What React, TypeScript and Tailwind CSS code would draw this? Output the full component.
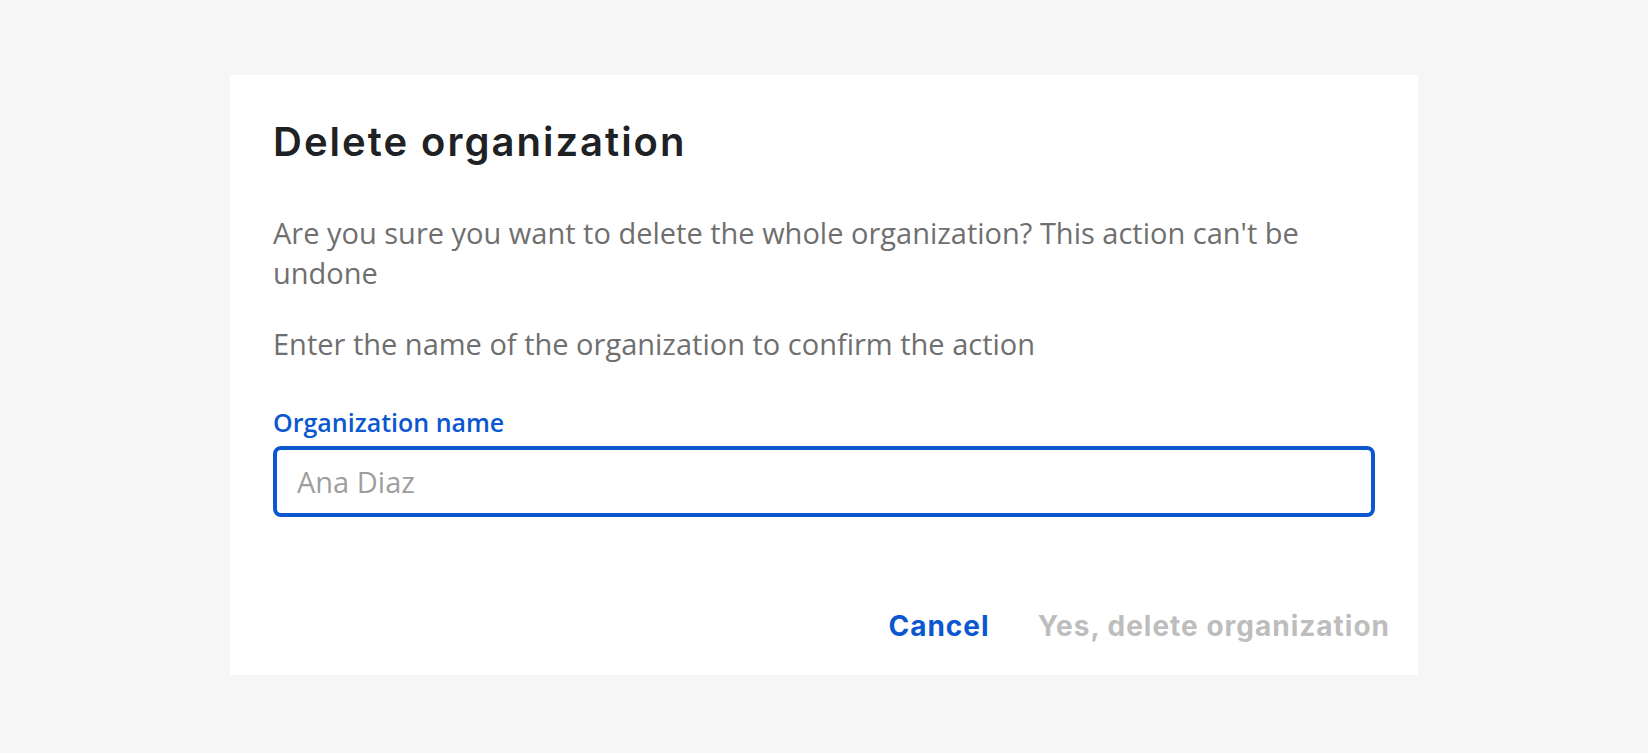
export default function App() {
  return (
    <div className="min-h-screen bg-[#f5f6f5] pt-[75px]">
      <div className="mx-auto flex h-[600px] w-[1188px] flex-col bg-white px-[43px] pt-[43px]">
        <h2 className="font-['Inter',sans-serif] text-[40px] font-semibold leading-[48px] tracking-[2px] text-[#202124]">
          Delete organization
        </h2>

        <p className="mt-[47px] font-['Open_Sans',sans-serif] text-[29px] leading-[40px] text-[#6f6f6f]">
          Are you sure you want to delete the whole organization? This action can't be undone
        </p>
        <p className="mt-[31px] font-['Open_Sans',sans-serif] text-[29px] leading-[40px] text-[#6f6f6f]">
          Enter the name of the organization to confirm the action
        </p>

        <label className="mt-[42px] font-['Open_Sans',sans-serif] text-[25px] font-semibold leading-[32px] text-[#0b57d0]">
          Organization name
        </label>
        <input
          className="mt-[8px] h-[71px] w-full rounded-[8px] border-4 border-[#0b57d0] px-[20px] font-['Open_Sans',sans-serif] text-[29px] text-[#202124] outline-none placeholder:text-[#9e9e9e]"
          placeholder="Ana Diaz"
        />

        <div className="-mr-[15px] mt-[95px] flex justify-end gap-[48px] font-['Inter',sans-serif] text-[28px] font-bold leading-[28px] tracking-[1px]">
          <button className="text-[#0b57d0]">Cancel</button>
          <button className="text-[#bdbdbd]" disabled>
            Yes, delete organization
          </button>
        </div>
      </div>
    </div>
  );
}
